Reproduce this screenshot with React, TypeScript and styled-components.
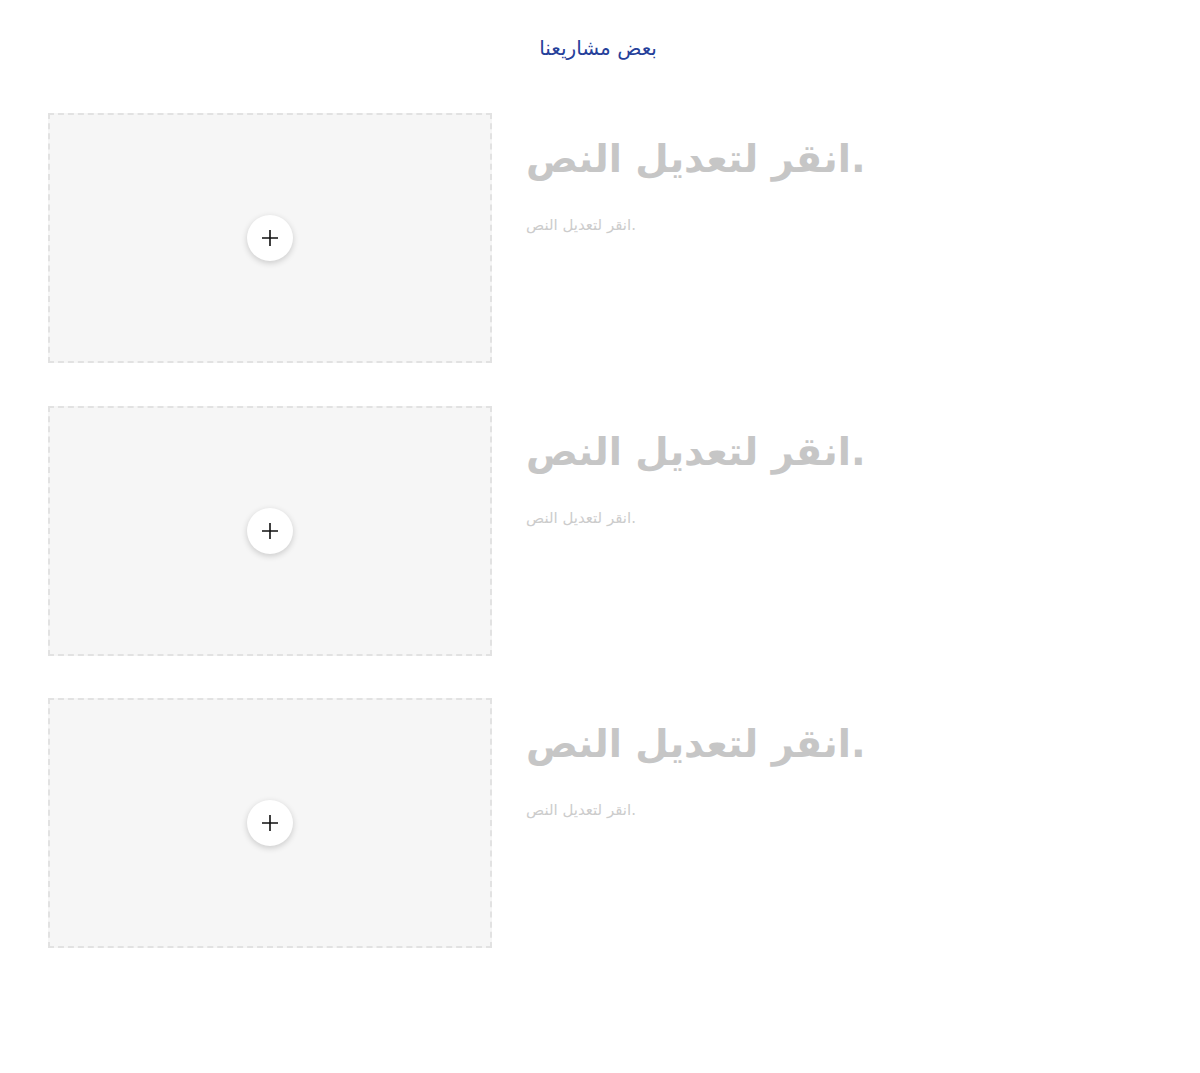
import styled, { createGlobalStyle } from "styled-components";

const Global = createGlobalStyle`
  html, body {
    margin: 0;
    padding: 0;
    background: #ffffff;
    font-family: "DejaVu Sans", "Noto Sans", sans-serif;
  }
`;

const Page = styled.div`
  width: 1200px;
  min-height: 1073px;
  box-sizing: border-box;
  padding: 34px 48px 0 48px;
`;

const SectionTitle = styled.h2`
  margin: 0 0 51px 0;
  text-align: center;
  font-size: 20px;
  font-weight: 400;
  color: #25409a;
  line-height: 28px;
  padding-right: 4px;
`;

const List = styled.div`
  display: flex;
  flex-direction: column;
  gap: 42.5px;
`;

const Row = styled.div`
  display: grid;
  grid-template-columns: 444px 1fr;
  column-gap: 34px;
`;

const Placeholder = styled.div`
  height: 250px;
  box-sizing: border-box;
  border: 2px dashed #e2e2e2;
  background: #f6f6f6;
  display: flex;
  align-items: center;
  justify-content: center;
`;

const AddButton = styled.button`
  width: 46px;
  height: 46px;
  border-radius: 50%;
  border: none;
  background: #ffffff;
  box-shadow: 0 2px 6px rgba(0, 0, 0, 0.18);
  display: flex;
  align-items: center;
  justify-content: center;
  padding: 0;
  cursor: pointer;
`;

const Text = styled.div`
  direction: ltr;
  text-align: left;
  padding-top: 21px;
`;

const Heading = styled.h3`
  margin: 0;
  font-size: 38.5px;
  font-weight: 700;
  color: #c6c6c6;
  line-height: 50px;
`;

const Body = styled.p`
  margin: 31px 0 0 0;
  font-size: 15px;
  color: #cccccc;
  line-height: 20px;
`;

const PlusIcon = () => (
  <svg width="18" height="18" viewBox="0 0 18 18">
    <path d="M9 1v16M1 9h16" stroke="#111111" strokeWidth="1.6" fill="none" />
  </svg>
);

const items = [1, 2, 3];

export default function App() {
  return (
    <Page>
      <Global />
      <SectionTitle>بعض مشاريعنا</SectionTitle>
      <List>
        {items.map((i) => (
          <Row key={i}>
            <Placeholder>
              <AddButton aria-label="add">
                <PlusIcon />
              </AddButton>
            </Placeholder>
            <Text>
              <Heading>انقر لتعديل النص.</Heading>
              <Body>انقر لتعديل النص.</Body>
            </Text>
          </Row>
        ))}
      </List>
    </Page>
  );
}
